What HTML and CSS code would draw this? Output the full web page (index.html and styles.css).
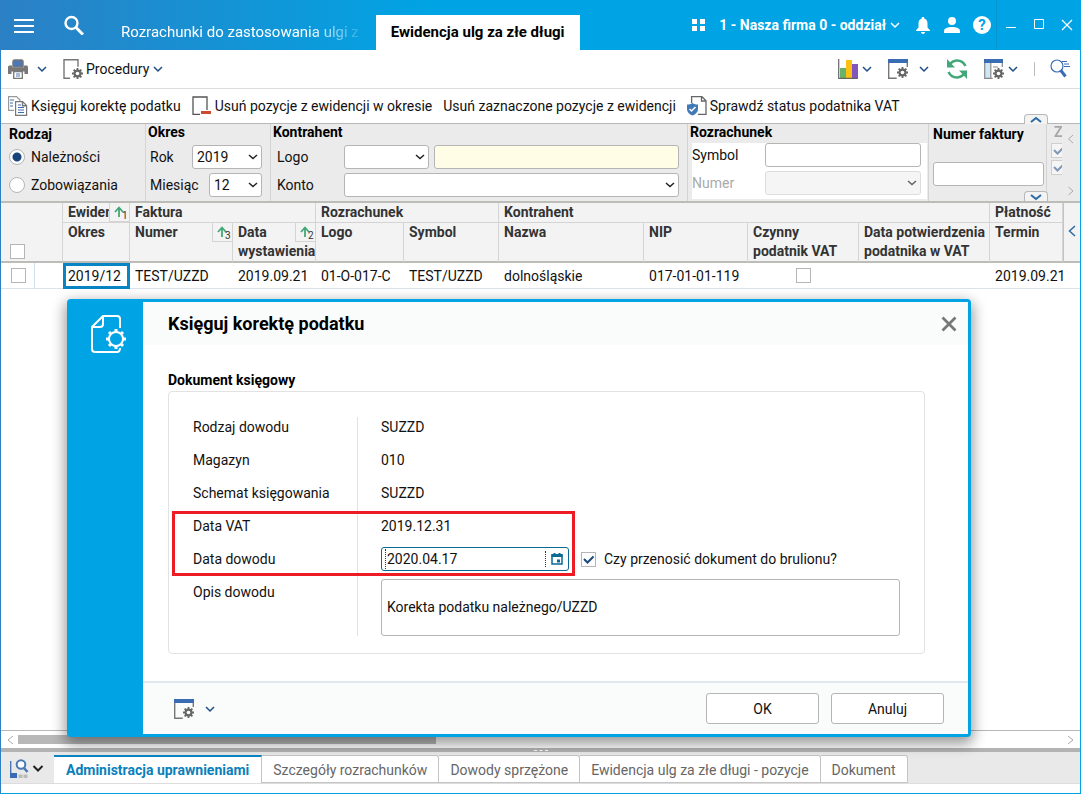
FILE: index.html
```html
<!DOCTYPE html>
<html lang="pl">
<head>
    <meta charset="UTF-8">
    <meta name="viewport" content="width=device-width, initial-scale=1.0">
    <title>Ewidencja ulg za złe długi</title>
    <link rel="stylesheet" href="styles.css">
</head>
<body>
    <!-- shared icons -->
    <svg class="defs" width="0" height="0" aria-hidden="true">
        <symbol id="chevron" viewBox="0 0 12 12"><path d="M2 4l4 4 4-4" fill="none" stroke="currentColor" stroke-width="1.5"/></symbol>
        <symbol id="gear" viewBox="0 0 12 12">
            <g fill="#666">
                <path d="M5 0h2v12H5zM0 5h12v2H0z"/>
                <path d="M5 0h2v12H5zM0 5h12v2H0z" transform="rotate(45 6 6)"/>
                <circle cx="6" cy="6" r="4.3"/>
            </g>
            <circle cx="6" cy="6" r="2" fill="#fff"/>
        </symbol>
        <symbol id="window-gear" viewBox="0 0 20 20">
            <path d="M.7 3v16.300h8M19.300 3v5" fill="none" stroke="#777" stroke-width="1.400"/>
            <path d="M0 0h20v4H0z" fill="#3a6cb4"/>
            <use href="#gear" x="9" y="8" width="11" height="11"/>
        </symbol>
        <symbol id="sort" viewBox="0 0 14 14"><path d="M6 12V3M2 7l4-4.500L10 7" fill="none" stroke="#43a878" stroke-width="1.800"/></symbol>
    </svg>

    <div class="window">
        <header class="titlebar">
            <button class="icon-btn" aria-label="Menu">
                <svg width="20" height="20" viewBox="0 0 20 20"><path d="M0 5h20M0 11h20M0 17h20" stroke="#fff" stroke-width="2"/></svg>
            </button>
            <button class="icon-btn search-btn" aria-label="Szukaj">
                <svg width="20" height="20" viewBox="0 0 20 20"><circle cx="7.500" cy="8" r="6" fill="none" stroke="#fff" stroke-width="2.400"/><path d="M12 12.500l7 7" stroke="#fff" stroke-width="3"/></svg>
            </button>
            <nav class="main-tabs">
                <a href="#" class="main-tab faded">Rozrachunki do zastosowania ulgi z</a>
                <a href="#" class="main-tab active">Ewidencja ulg za złe długi</a>
            </nav>
            <div class="title-right">
                <svg class="apps" width="13" height="13" viewBox="0 0 13 13"><path d="M0 0h5v5H0zM8 0h5v5H8zM0 7h5v5H0zM8 7h5v5H8z" fill="#fff"/></svg>
                <button class="company">1 - Nasza firma 0 - oddział <svg width="12" height="12"><use href="#chevron"/></svg></button>
                <div class="user-icons">
                    <button class="icon-btn" aria-label="Powiadomienia">
                        <svg width="16" height="18" viewBox="0 0 16 18"><path d="M8 1c1 0 1.300.5 1.300 1.400C11.500 3 12.500 5 12.500 7.500v4l2.500 2.700V15H1v-.8l2.500-2.700v-4C3.500 5 4.500 3 6.700 2.400 6.700 1.500 7 1 8 1zM6 16h4c0 1.200-.9 2-2 2s-2-.8-2-2z" fill="#fff"/></svg>
                    </button>
                    <button class="icon-btn" aria-label="Użytkownik">
                        <svg width="16" height="18" viewBox="0 0 16 18"><circle cx="8" cy="5" r="4" fill="#fff"/><path d="M0 17v-2c0-3 4-4 8-4s8 1 8 4v2z" fill="#fff"/></svg>
                    </button>
                    <button class="help" aria-label="Pomoc">?</button>
                </div>
                <div class="window-buttons">
                    <button class="icon-btn" aria-label="Minimalizuj"><svg width="12" height="12"><path d="M1 8.500h10" stroke="#fff"/></svg></button>
                    <button class="icon-btn" aria-label="Maksymalizuj"><svg width="12" height="12"><path d="M1.500 .5h9v9h-9z" fill="none" stroke="#fff"/></svg></button>
                    <button class="icon-btn" aria-label="Zamknij"><svg width="12" height="12"><path d="M1 1l10 10M11 1L1 11" stroke="#fff" stroke-width="1.200"/></svg></button>
                </div>
            </div>
        </header>

        <div class="toolbar">
            <button class="tool split" aria-label="Drukuj">
                <svg width="20" height="20" viewBox="0 0 20 20">
                    <path d="M5 8V3c0-1.500.5-2 1.500-2h7c1 0 1.500.5 1.500 2v5z" fill="#4a78b5" stroke="#777" stroke-width="1.500"/>
                    <path d="M2 6.500h2v2h12v-2h2c1.500 0 2 .5 2 2V15h-3.500v-2.500h-13V15H0V8.500c0-1.500.5-2 2-2z" fill="#777"/>
                    <path d="M5.700 12.700h8.600v6.600H5.700z" fill="#fff" stroke="#777" stroke-width="1.300"/>
                    <path d="M8 15h4M8 17h4" stroke="#4a78b5"/>
                </svg>
                <svg class="chev" width="12" height="12"><use href="#chevron"/></svg>
            </button>
            <button class="tool">
                <svg width="20" height="20" viewBox="0 0 20 20"><path d="M7 19.300H1V.7h14v7" fill="none" stroke="#777" stroke-width="1.400"/><use href="#gear" x="9" y="9" width="11" height="11"/></svg>
                Procedury
                <svg class="chev" width="12" height="12"><use href="#chevron"/></svg>
            </button>
            <div class="toolbar-right">
                <button class="tool" aria-label="Wykres">
                    <svg width="20" height="20" viewBox="0 0 20 20"><path d="M2 9h6v10H2z" fill="#67b36a"/><path d="M8 1h6v18H8z" fill="#fcc010"/><path d="M14 5h6v14h-6z" fill="#8257bd"/><path d="M.7 0v19.300H20" fill="none" stroke="#666" stroke-width="1.200"/></svg>
                    <svg class="chev" width="12" height="12"><use href="#chevron"/></svg>
                </button>
                <button class="tool wide" aria-label="Ustawienia okna">
                    <svg width="20" height="20"><use href="#window-gear"/></svg>
                    <svg class="chev" width="12" height="12"><use href="#chevron"/></svg>
                </button>
                <button class="tool refresh" aria-label="Odśwież">
                    <svg width="20" height="20" viewBox="0 0 20 20"><path d="M18.500 7C16.500 3 13 1.300 9.500 1.500 6.500 1.700 4.500 3 2.500 5.500M1.500 13C3.500 17 7 18.700 10.500 18.500c3-.2 5-1.500 7-4" fill="none" stroke="#43a878" stroke-width="2.600"/><path d="M0 0v8.500h8zM20 20v-8.500h-8z" fill="#43a878"/></svg>
                </button>
                <button class="tool" aria-label="Kolumny">
                    <svg width="20" height="20" viewBox="0 0 20 20"><path d="M1 4h5.500v15H1z" fill="#cfe6f7"/><path d="M.7 3v16.300h8M18.300 3v5M6.800 4v15M9 8h5" fill="none" stroke="#888" stroke-width="1.200"/><path d="M0 0h19v4H0z" fill="#3a6cb4"/><use href="#gear" x="9" y="9" width="11" height="11"/></svg>
                    <svg class="chev" width="12" height="12"><use href="#chevron"/></svg>
                </button>
                <span class="separator"></span>
                <button class="tool" aria-label="Filtruj">
                    <svg width="20" height="20" viewBox="0 0 20 20"><circle cx="7" cy="7" r="6" fill="none" stroke="#3a6cb4" stroke-width="1.200"/><path d="M10.500 11l5 6.500" stroke="#3a6cb4" stroke-width="3"/><path d="M12 2.500h5M14 5h5M14 7.500h6" stroke="#3a6cb4" stroke-width="1.200"/></svg>
                </button>
            </div>
        </div>

        <div class="toolbar actions">
            <button class="tool">
                <svg width="20" height="20" viewBox="0 0 20 20"><path d="M6 14.400H.6V.6h8L12 4v1" fill="#fff" stroke="#999" stroke-width="1.200"/><path d="M2 4h4M2 7h3M2 10h3" stroke="#3a6cb4"/><path d="M7.600 5.600h7l4 4v9.800h-11z" fill="#fff" stroke="#777" stroke-width="1.200"/><path d="M14.500 5.500v4.200h4" fill="none" stroke="#777" stroke-width="1.400"/><path d="M10 9h3M10 11.500h6M10 14h6M10 16.500h6" stroke="#3a6cb4"/></svg>
                Księguj korektę podatku
            </button>
            <button class="tool">
                <svg width="20" height="20" viewBox="0 0 20 20"><path d="M8 18.400H1V1h14v13" fill="none" stroke="#555" stroke-width="1.300"/><path d="M9 15h10v3H9z" fill="#cf4a32"/></svg>
                Usuń pozycje z ewidencji w okresie
            </button>
            <button class="tool">Usuń zaznaczone pozycje z ewidencji</button>
            <button class="tool">
                <svg width="20" height="20" viewBox="0 0 20 20"><path d="M4.600 7V.7H15l4 4v13.700h-8M14.500 1v4h4.500" fill="none" stroke="#666" stroke-width="1.300"/><path d="M0 8.500c2 0 4-.5 5.500-1.500C7 8 9 8.500 11 8.500V13c0 3-2.500 5.500-5.500 6.500C2.500 18.500 0 16 0 13z" fill="#4079b8"/><path d="M2.500 13l2 2 4-4" fill="none" stroke="#fff" stroke-width="1.500"/></svg>
                Sprawdź status podatnika VAT
            </button>
        </div>

        <section class="filters">
            <div class="panel low kind">
                <h2>Rodzaj</h2>
                <label class="row"><input type="radio" name="kind" checked> Należności</label>
                <label class="row"><input type="radio" name="kind"> Zobowiązania</label>
            </div>
            <div class="panel period">
                <h2>Okres</h2>
                <div class="row"><label for="year">Rok</label><select id="year" class="year"><option>2019</option></select></div>
                <div class="row"><label for="month">Miesiąc</label><select id="month" class="month"><option>12</option></select></div>
            </div>
            <div class="panel customer">
                <h2>Kontrahent</h2>
                <div class="row"><label for="logo">Logo</label><select id="logo" class="logo-select"></select><input type="text" class="yellow" aria-label="Nazwa kontrahenta"></div>
                <div class="row"><label for="account">Konto</label><select id="account" class="grow"></select></div>
            </div>
            <div class="panel settlement">
                <h2>Rozrachunek</h2>
                <div class="white-box">
                    <div class="row"><label for="symbol">Symbol</label><input type="text" id="symbol" class="grow"></div>
                    <div class="row disabled"><label for="number">Numer</label><select id="number" class="grow" disabled></select></div>
                </div>
            </div>
            <div class="panel low invoice">
                <h2><label for="invoice">Numer faktury</label></h2>
                <input type="text" id="invoice">
            </div>
            <div class="panel clipped">
                <h2>Z</h2>
                <input type="checkbox" aria-label="Z 1" checked disabled>
                <input type="checkbox" aria-label="Z 2" checked disabled>
            </div>
            <div class="filter-nav">
                <button aria-label="Poprzedni"><svg width="8" height="10"><path d="M6 1L1.500 5 6 9" fill="none" stroke="#aaa"/></svg></button>
                <button aria-label="Następny"><svg width="8" height="10"><path d="M1.500 1L6 5 1.500 9" fill="none" stroke="#aaa"/></svg></button>
            </div>
            <button class="fold up" aria-label="Zwiń"><svg width="12" height="8"><path d="M1 6l5-4 5 4" fill="none" stroke="#2c6aa5" stroke-width="2"/></svg></button>
            <button class="fold down" aria-label="Rozwiń"><svg width="12" height="8"><path d="M1 2l5 4 5-4" fill="none" stroke="#2c6aa5" stroke-width="2"/></svg></button>
        </section>

        <main class="grid-area">
            <table class="grid">
                <colgroup>
                    <col class="c-check"><col class="c-mark"><col class="c-period"><col class="c-invoice"><col class="c-date"><col class="c-logo"><col class="c-symbol"><col class="c-name"><col class="c-nip"><col class="c-active"><col class="c-confirm"><col class="c-due"><col>
                </colgroup>
                <thead>
                    <tr class="groups">
                        <th colspan="2" rowspan="2" class="check-all"><input type="checkbox" aria-label="Zaznacz wszystko"></th>
                        <th class="sorted">Ewiden<span class="sort"><svg width="14" height="14"><use href="#sort"/></svg><sub>1</sub></span></th>
                        <th colspan="2">Faktura</th>
                        <th colspan="2">Rozrachunek</th>
                        <th colspan="4">Kontrahent</th>
                        <th>Płatność</th>
                        <th rowspan="2" class="expand"><button aria-label="Pokaż panel"><svg width="8" height="12"><path d="M7 1L1.500 6 7 11" fill="none" stroke="#2c6aa5" stroke-width="1.500"/></svg></button></th>
                    </tr>
                    <tr class="columns">
                        <th>Okres</th>
                        <th class="sorted">Numer<span class="sort"><svg width="14" height="14"><use href="#sort"/></svg><sub>3</sub></span></th>
                        <th class="sorted">Data<br>wystawienia<span class="sort"><svg width="14" height="14"><use href="#sort"/></svg><sub>2</sub></span></th>
                        <th>Logo</th>
                        <th>Symbol</th>
                        <th>Nazwa</th>
                        <th>NIP</th>
                        <th>Czynny<br>podatnik VAT</th>
                        <th>Data potwierdzenia<br>podatnika w VAT</th>
                        <th>Termin</th>
                    </tr>
                </thead>
                <tbody>
                    <tr>
                        <td class="line"><input type="checkbox" aria-label="Zaznacz wiersz"></td>
                        <td></td>
                        <td class="selected">2019/12</td>
                        <td>TEST/UZZD</td>
                        <td>2019.09.21</td>
                        <td>01-O-017-C</td>
                        <td>TEST/UZZD</td>
                        <td>dolnośląskie</td>
                        <td>017-01-01-119</td>
                        <td class="center"><input type="checkbox" aria-label="Czynny podatnik VAT"></td>
                        <td></td>
                        <td colspan="2">2019.09.21</td>
                    </tr>
                </tbody>
            </table>
        </main>

        <div class="scrollbar">
            <svg width="8" height="10"><path d="M7 1L2 5l5 4" fill="none" stroke="#aaa"/></svg>
            <div class="track"><div class="thumb"></div></div>
            <svg width="8" height="10"><path d="M1 1l5 4-5 4" fill="none" stroke="#aaa"/></svg>
        </div>
        <div class="splitter"><span></span></div>

        <nav class="bottom-tabs">
            <button class="view-btn" aria-label="Widok">
                <svg width="20" height="20" viewBox="0 0 20 20"><path d="M1.700 2v12" stroke="#4a78b5" stroke-width="1.400"/><path d="M1 14h7v5H1z" fill="#3a6cb4"/><path d="M9.500 15.500h4v3.500h-4zM14.500 15.500h4v3.500h-4z" fill="#bbb"/><circle cx="12" cy="5.500" r="4.300" fill="#fff" stroke="#4a78b5" stroke-width="2"/><path d="M14.500 8.500l4 4.500" stroke="#4a78b5" stroke-width="2.500"/></svg>
                <svg width="12" height="12"><path d="M1.500 3L6 7.500 10.500 3" fill="none" stroke="#222" stroke-width="2"/></svg>
            </button>
            <a href="#" class="tab active">Administracja uprawnieniami</a>
            <a href="#" class="tab">Szczegóły rozrachunków</a>
            <a href="#" class="tab">Dowody sprzężone</a>
            <a href="#" class="tab">Ewidencja ulg za złe długi - pozycje</a>
            <a href="#" class="tab">Dokument</a>
        </nav>

        <div class="dialog" role="dialog" aria-labelledby="dialog-title">
            <div class="dialog-side">
                <svg width="36" height="40" viewBox="0 0 36 40" fill="none" stroke="#fff" stroke-width="2">
                    <path d="M29 13V4c0-2-1-3-3-3H12L1 12v22c0 2 1 3 3 3h22c2 0 3-1 3-4M12 1v8c0 2-1 3-3 3H1"/>
                    <circle cx="25" cy="24" r="7"/>
                    <path d="M25 17v-3M25 31v3M18 24h-3M32 24h3M20 19l-2-2M30 19l2-2M20 29l-2 2M30 29l2 2" stroke-width="3"/>
                </svg>
            </div>
            <div class="dialog-main">
                <div class="dialog-head">
                    <h1 id="dialog-title">Księguj korektę podatku</h1>
                    <button class="icon-btn" aria-label="Zamknij"><svg width="16" height="16"><path d="M1.500 1.500l13 13M14.500 1.500l-13 13" stroke="#777" stroke-width="2.800"/></svg></button>
                </div>
                <div class="dialog-body">
                    <h2>Dokument księgowy</h2>
                    <div class="form">
                        <div class="labels">
                            <span>Rodzaj dowodu</span>
                            <span>Magazyn</span>
                            <span>Schemat księgowania</span>
                            <span>Data VAT</span>
                            <label for="doc-date">Data dowodu</label>
                            <label for="description">Opis dowodu</label>
                        </div>
                        <div class="values">
                            <span>SUZZD</span>
                            <span>010</span>
                            <span>SUZZD</span>
                            <span>2019.12.31</span>
                            <div class="date-row">
                                <div class="date-field">
                                    <input type="text" id="doc-date" value="2020.04.17">
                                    <button aria-label="Kalendarz"><svg width="12" height="12" viewBox="0 0 12 12"><path d="M1 2h10v9H1z" fill="#fff" stroke="#0a6a96" stroke-width="1.500"/><path d="M.5 1h11v3H.5zM2.500 0h2v2h-2zM7.500 0h2v2h-2zM6 6.500h3v3H6z" fill="#0a6a96"/></svg></button>
                                </div>
                                <label class="draft"><input type="checkbox" checked> Czy przenosić dokument do brulionu?</label>
                            </div>
                            <textarea id="description" rows="1">Korekta podatku należnego/UZZD</textarea>
                        </div>
                        <div class="highlight"></div>
                    </div>
                </div>
                <div class="dialog-foot">
                    <button class="tool wide settings" aria-label="Ustawienia okna">
                        <svg width="20" height="20"><use href="#window-gear"/></svg>
                        <svg class="chev" width="12" height="12"><use href="#chevron"/></svg>
                    </button>
                    <button class="btn">OK</button>
                    <button class="btn">Anuluj</button>
                </div>
            </div>
        </div>
    </div>
</body>
</html>
```
FILE: styles.css
```css
* {
    box-sizing: border-box;
}
body {
    margin: 0;
    font-family: Roboto, sans-serif;
    font-size: 14px;
    line-height: 20px;
    color: #111;
}
button, input, select, textarea {
    font: inherit;
    color: inherit;
}
button {
    padding: 0;
    border: none;
    background: none;
    cursor: pointer;
}
a {
    color: inherit;
    text-decoration: none;
}
h1, h2 {
    margin: 0;
    color: #000;
}
h2 {
    font-size: 14px;
}
svg {
    display: block;
    flex: none;
}
.defs {
    position: absolute;
}
.window {
    position: relative;
    display: flex;
    flex-direction: column;
    min-height: 100vh;
    border: 1px solid #00a4e4;
    border-top: none;
    border-left-color: #2c80c4;
    background: #fff;
}

/* title bar */
.titlebar {
    display: flex;
    height: 50px;
    margin: 0 -1px;
    padding-left: 14px;
    background: linear-gradient(90deg, #2c80c4, #00a4e4 40%);
    color: #fff;
}
.icon-btn {
    display: flex;
    align-items: center;
    justify-content: center;
}
.search-btn {
    margin-left: 30px;
}
.main-tabs {
    display: flex;
    flex: 1;
    align-items: flex-end;
    gap: 2px;
    margin-left: 22px;
    white-space: nowrap;
}
.main-tab {
    height: 35px;
    padding: 0 15px;
    font-size: 15px;
    line-height: 34px;
}
.main-tab.faded {
    -webkit-mask-image: linear-gradient(90deg, #000 75%, transparent 98%);
    mask-image: linear-gradient(90deg, #000 75%, transparent 98%);
}
.main-tab.active {
    background: #fff;
    color: #000;
    font-weight: bold;
}
.title-right {
    display: flex;
    align-items: center;
}
.company {
    display: flex;
    align-items: center;
    gap: 3px;
    margin: 0 14px;
    font-weight: bold;
}
.user-icons {
    display: flex;
    align-items: center;
    gap: 13px;
    padding-right: 5px;
}
.help {
    width: 18px;
    height: 18px;
    border-radius: 50%;
    background: #fff;
    color: #00a4e4;
    font-weight: bold;
    font-size: 15px;
    line-height: 18px;
}
.window-buttons {
    display: flex;
    align-items: center;
    gap: 16px;
    height: 50px;
    padding: 0 8px;
    border-left: 1px solid #0795ce;
}

/* toolbars */
.toolbar {
    display: flex;
    align-items: center;
    gap: 15px;
    height: 39px;
    padding: 0 10px 0 7px;
    border-bottom: 1px solid #ddd;
}
.toolbar.actions {
    height: 34px;
    gap: 11px;
    border-bottom: none;
}
.tool {
    display: flex;
    align-items: center;
    gap: 3px;
    white-space: nowrap;
}
.split {
    gap: 8px;
}
.wide {
    gap: 10px;
}
.chev {
    color: #1f4e86;
}
.toolbar-right {
    display: flex;
    align-items: center;
    gap: 15px;
    margin-left: auto;
}
.refresh {
    width: 24px;
    justify-content: center;
}
.separator {
    width: 1px;
    height: 14px;
    background: #bbb;
}

/* filters */
.filters {
    position: relative;
    display: flex;
    height: 80px;
    border-top: 1px solid #b8b8b8;
    border-bottom: 2px solid #bcbcb9;
    background: #ebebeb;
}
.panel {
    display: flex;
    flex-direction: column;
    gap: 4px;
    padding: 0 8px 0 2px;
    border-right: 1px solid #d4d4d4;
    white-space: nowrap;
}
.panel h2 {
    height: 17px;
    line-height: 16px;
}
.panel.low h2 {
    line-height: 20px;
}
.row {
    display: flex;
    align-items: center;
    gap: 5px;
    height: 24px;
}
.period .row {
    justify-content: space-between;
    padding-left: 2px;
}
.kind {
    width: 145px;
    padding-left: 8px;
}
.kind .row {
    gap: 6px;
}
.period {
    width: 125px;
}
.customer {
    flex: 1;
}
.customer label {
    width: 62px;
    margin-left: 4px;
}
.settlement {
    width: 241px;
    padding-right: 1px;
}
.white-box {
    display: flex;
    flex-direction: column;
    gap: 4px;
    height: 56px;
    margin: -2px 0 0 2px;
    padding-right: 6px;
    background: #fff;
}
.white-box label {
    width: 68px;
}
.disabled {
    color: #aaa;
}
.invoice {
    width: 118px;
    gap: 21px;
    padding: 0 2px 0 4px;
}
.clipped {
    width: 15px;
    gap: 2px;
    padding: 0 0 0 4px;
    border: none;
    overflow: hidden;
    opacity: 0.5;
}
.clipped h2 {
    padding-left: 3px;
    color: #666;
}
.filter-nav {
    display: flex;
    flex-direction: column;
    justify-content: space-between;
    align-items: center;
    width: 18px;
    padding: 10px 0 5px;
}
.fold {
    position: absolute;
    right: 32px;
    display: flex;
    align-items: center;
    justify-content: center;
    width: 24px;
    height: 10px;
    border: 1px solid #b8b8b8;
    border-bottom: none;
    border-radius: 4px 4px 0 0;
    background: #f3f3f3;
}
.fold.up {
    top: -10px;
}
.fold.down {
    bottom: 0;
}
input, select, textarea {
    margin: 0;
    border: 1px solid #b5b5b5;
    border-radius: 3px;
    background-color: #fff;
    outline: none;
}
input[type="text"], select {
    height: 24px;
    padding: 0 4px;
    min-width: 0;
}
select {
    appearance: none;
    background-image: url("data:image/svg+xml,%3Csvg xmlns='http://www.w3.org/2000/svg' width='10' height='6'%3E%3Cpath d='M1 1l4 3.500L9 1' fill='none' stroke='%23222' stroke-width='1.500'/%3E%3C/svg%3E");
    background-repeat: no-repeat;
    background-position: right 3px center;
}
select:disabled {
    border-color: #d0d0d0;
    background-color: #f2f2f2;
    opacity: 0.7;
}
.year {
    width: 70px;
}
.month {
    width: 53px;
}
.logo-select {
    width: 85px;
}
input.yellow {
    flex: 1;
    background-color: #fffde6;
}
.grow {
    flex: 1;
}
input[type="radio"] {
    appearance: none;
    width: 16px;
    height: 16px;
    border-radius: 50%;
}
input[type="radio"]:checked {
    background: radial-gradient(circle, #17457a 4px, #fff 5px);
}
input[type="checkbox"] {
    appearance: none;
    flex: none;
    display: block;
    width: 15px;
    height: 15px;
    border-radius: 0;
}
input[type="checkbox"]:checked {
    background: #fff url("data:image/svg+xml,%3Csvg xmlns='http://www.w3.org/2000/svg' width='13' height='13'%3E%3Cpath d='M2 6l3.500 3.500L11.500 3.500' fill='none' stroke='%231b4a80' stroke-width='2'/%3E%3C/svg%3E") no-repeat center;
}

/* grid */
.grid-area {
    flex: 1;
}
.grid {
    width: 100%;
    table-layout: fixed;
    border-collapse: separate;
    border-spacing: 0;
    white-space: nowrap;
}
.c-check { width: 34px; }
.c-mark { width: 28px; }
.c-period { width: 67px; }
.c-invoice { width: 103px; }
.c-date { width: 83px; }
.c-logo { width: 88px; }
.c-symbol { width: 95px; }
.c-name { width: 145px; }
.c-nip { width: 104px; }
.c-active { width: 111px; }
.c-confirm { width: 131px; }
.c-due { width: 73px; }
.grid th, .grid td {
    padding: 0 0 0 5px;
    text-align: left;
    vertical-align: top;
}
.grid th {
    position: relative;
    border-right: 1px solid #d4d4d4;
    background: #f3f3f3;
    color: #333;
    line-height: 19px;
    overflow: hidden;
}
.groups th {
    border-bottom: 1px solid #d4d4d4;
}
.columns th, .groups th.check-all, .groups th.expand {
    border-bottom: 2px solid #bcbcb9;
}
.grid .check-all {
    padding: 0 0 2px 9px;
    vertical-align: bottom;
}
.grid .expand {
    padding: 0 4px;
    border-left: 1px solid #c4c4c4;
    border-right: none;
    vertical-align: middle;
}
.sort {
    position: absolute;
    top: 0;
    right: 0;
    display: flex;
    width: 20px;
    height: 19px;
    padding: 2px 1px 1px 3px;
    border-left: 1px solid #d4d4d4;
    border-bottom: 1px solid #d4d4d4;
    background: #f3f3f3;
}
.sort sub {
    align-self: flex-end;
    margin-left: -5px;
    font-size: 10px;
    font-weight: normal;
    line-height: 8px;
}
.grid td {
    height: 26px;
    border-bottom: 1px solid #d9e3ea;
    line-height: 20px;
    vertical-align: middle;
}
.grid .line {
    padding-left: 10px;
    border-right: 1px solid #cfe0f0;
}
.grid .selected {
    padding-left: 2px;
    border: 3px solid #0a85c4;
}
.grid .center {
    padding: 0;
}
.center input {
    margin: 0 auto;
}

/* scrollbar and bottom tabs */
.scrollbar {
    display: flex;
    align-items: center;
    gap: 4px;
    height: 18px;
    padding: 0 5px;
    border-top: 1px solid #b8b8b8;
}
.track {
    flex: 1;
}
.thumb {
    width: 40%;
    height: 9px;
    background: #b8b8b8;
}
.splitter {
    display: flex;
    align-items: center;
    justify-content: center;
    height: 4px;
    background: #b3b3b3;
}
.splitter span {
    width: 14px;
    border-top: 1px dashed #fff;
}
.bottom-tabs {
    display: flex;
    align-items: flex-end;
    height: 32px;
    margin-bottom: 9px;
    border-bottom: 1px solid #ddd;
    background: #e9e9e9;
    white-space: nowrap;
}
.view-btn {
    display: flex;
    align-items: center;
    gap: 3px;
    width: 53px;
    height: 28px;
    padding-left: 8px;
}
.tab {
    height: 28px;
    padding: 0 11px;
    border: 1px solid #c4c4c4;
    border-left: none;
    border-radius: 0 3px 0 0;
    background: #fff;
    color: #666;
    line-height: 28px;
}
.tab.active {
    padding: 0 12px;
    border-top: 2px solid #0a85c4;
    border-bottom: none;
    border-radius: 0;
    color: #0a80bb;
    font-weight: bold;
    line-height: 27px;
}

/* dialog */
.dialog {
    position: absolute;
    top: 299px;
    left: 66px;
    right: 109px;
    display: flex;
    border: 3px solid #00a4e4;
    border-radius: 4px;
    background: #00a4e4;
    box-shadow: 0 5px 14px 2px rgba(0, 0, 0, 0.4);
}
.dialog-side {
    width: 73px;
    padding: 13px 0 0 21px;
}
.dialog-main {
    flex: 1;
    background: #fff;
}
.dialog-head {
    display: flex;
    align-items: center;
    justify-content: space-between;
    height: 43px;
    padding: 0 11px 0 25px;
    background: #fafcfc;
}
.dialog-head h1 {
    font-size: 18px;
    line-height: 24px;
}
.dialog-body {
    padding: 25px 43px 27px 25px;
}
.form {
    position: relative;
    display: flex;
    margin-top: 1px;
    padding: 25px 24px 17px;
    border: 1px solid #e2e2e2;
    border-radius: 4px;
}
.labels {
    display: flex;
    flex-direction: column;
    width: 165px;
    border-right: 1px solid #e2e2e2;
}
.labels > *, .values > span {
    height: 33px;
}
.values {
    flex: 1;
    display: flex;
    flex-direction: column;
    padding-left: 23px;
}
.date-row {
    display: flex;
    align-items: center;
    gap: 12px;
    height: 24px;
    margin: -2px 0 8px;
}
.date-field {
    display: flex;
    width: 188px;
    height: 24px;
    border: 1px solid #0a6a96;
    border-radius: 3px;
}
.date-field input[type="text"] {
    flex: 1;
    height: 20px;
    margin: 1px 0 0 3px;
    padding: 0 1px;
    border: none;
    border-left: 1px dotted #333;
    border-radius: 0;
}
.date-field button {
    display: flex;
    align-items: center;
    justify-content: center;
    width: 23px;
    margin: 3px 0;
    border-left: 1px dotted #333;
}
.draft {
    display: flex;
    align-items: center;
    gap: 8px;
}
textarea {
    display: block;
    width: 100%;
    height: 57px;
    padding: 17px 5px;
    resize: none;
    overflow: hidden;
}
.highlight {
    position: absolute;
    top: 119px;
    left: 3px;
    width: 403px;
    height: 65px;
    border: 3px solid #ed1c24;
}
.dialog-foot {
    display: flex;
    align-items: center;
    gap: 12px;
    height: 53px;
    padding: 0 24px 0 31px;
    border-top: 2px solid #dfe8ef;
    background: #fafcfc;
}
.settings {
    margin-right: auto;
}
.btn {
    width: 113px;
    height: 31px;
    border: 1px solid #b5b5b5;
    border-radius: 3px;
    background: #fff;
}
```
